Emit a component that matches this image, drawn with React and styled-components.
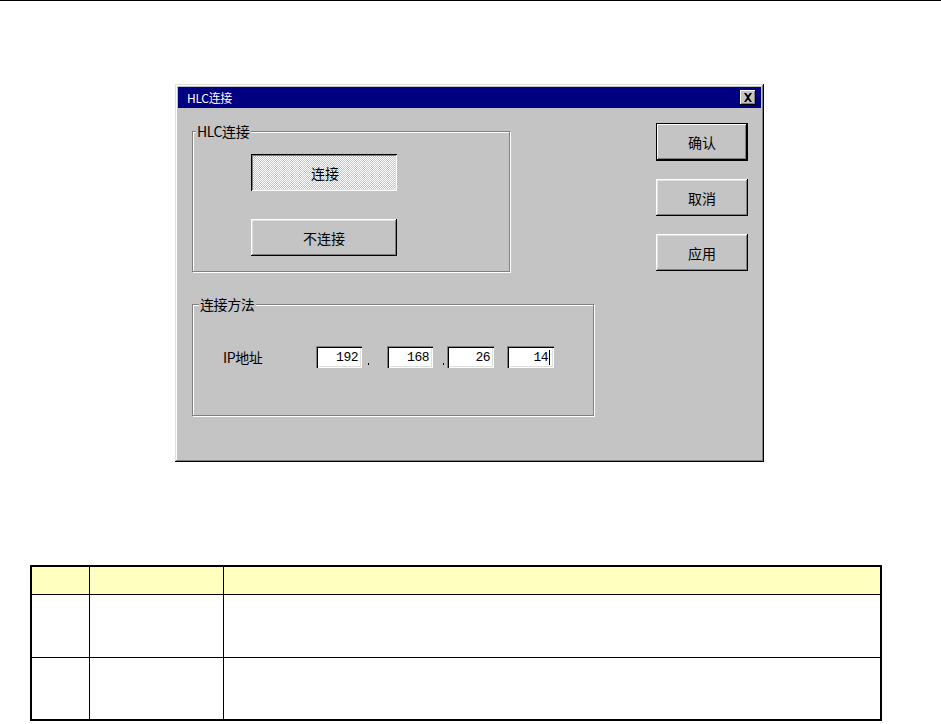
import React from "react";
import styled, { createGlobalStyle } from "styled-components";

const Global = createGlobalStyle`
  html, body { margin: 0; padding: 0; background: #fff; }
  body { font-family: "Noto Sans CJK SC", "Liberation Sans", sans-serif; }
`;

const Page = styled.div`
  width: 941px;
  height: 724px;
  border-top: 1px solid #000;
  box-sizing: border-box;
  display: flex;
  flex-direction: column;
`;

const Figure = styled.div`
  padding: 83px 0 0 175px;
`;

const Dialog = styled.div`
  width: 589px;
  height: 378px;
  box-sizing: border-box;
  padding: 3px;
  background: #c4c4c4;
  display: flex;
  flex-direction: column;
  box-shadow: inset -1px -1px #000, inset 1px 1px #dfdfdf,
    inset -2px -2px #808080, inset 2px 2px #fff;
`;

const TitleBar = styled.div`
  height: 21px;
  background: #000080;
  color: #fff;
  display: flex;
  align-items: center;
  justify-content: space-between;
  padding: 0 5px 0 9px;
  font-size: 12px;
  letter-spacing: -0.3px;
`;

const CloseBtn = styled.div`
  width: 16px;
  height: 15px;
  box-sizing: border-box;
  background: #c4c4c4;
  display: flex;
  align-items: center;
  justify-content: center;
  box-shadow: inset -1px -1px #000, inset 1px 1px #fff, inset -2px -2px #808080;
`;

const Body = styled.div`
  flex: 1;
  display: flex;
  justify-content: space-between;
  padding: 15px 13px 0 14px;
`;

const LeftCol = styled.div`
  display: flex;
  flex-direction: column;
  align-items: flex-start;
  padding-top: 8px;
  gap: 32px;
`;

const Group = styled.div`
  position: relative;
  width: ${(p) => p.$w}px;
  height: ${(p) => p.$h}px;
  box-sizing: border-box;
  border: 1px solid #808080;
  box-shadow: inset 1px 1px #fff, 1px 1px #fff;
  padding: ${(p) => p.$pad};
`;

const Legend = styled.span`
  position: absolute;
  top: -10px;
  left: ${(p) => p.$x}px;
  padding: 0 2px 0 1px;
  background: #c4c4c4;
  font-size: 14px;
  line-height: 18px;
  color: #000;
  letter-spacing: -0.4px;
`;

const ConnCol = styled.div`
  display: flex;
  flex-direction: column;
  gap: 28px;
`;

const WinButton = styled.div`
  width: ${(p) => p.$w}px;
  height: ${(p) => p.$h}px;
  box-sizing: border-box;
  display: flex;
  align-items: center;
  justify-content: center;
  font-size: 14px;
  color: #000;
  background: #c4c4c4;
  box-shadow: inset -1px -1px #000, inset 1px 1px #fff, inset -2px -2px #808080,
    inset 2px 2px #dfdfdf;
  ${(p) =>
    p.$default &&
    `border: 1px solid #000;
     box-shadow: inset -1px -1px #000, inset 1px 1px #fff, inset -2px -2px #808080;`}
  ${(p) =>
    p.$pressed &&
    `background: repeating-conic-gradient(#ffffff 0 25%, #c4c4c4 0 50%) 0 0 / 2px 2px;
     box-shadow: inset 1px 1px #000, inset -1px -1px #fff, inset 2px 2px #808080, inset -2px -2px #dfdfdf;
     padding: 1px 0 0 2px;`}
`;

const RightCol = styled.div`
  display: flex;
  flex-direction: column;
  gap: 18px;
`;

const IpRow = styled.div`
  display: flex;
  align-items: center;
`;

const IpLabel = styled.span`
  font-size: 14px;
  width: 93px;
  color: #000;
  letter-spacing: -0.4px;
`;

const IpField = styled.div`
  width: ${(p) => p.$w}px;
  height: 22px;
  box-sizing: border-box;
  background: #fff;
  box-shadow: inset 1px 1px #808080, inset 2px 2px #000, inset -1px -1px #fff,
    inset -2px -2px #dfdfdf;
  display: flex;
  align-items: center;
  justify-content: flex-end;
  padding: 1px 4px 0 0;
  font-family: "Liberation Mono", monospace;
  font-size: 13px;
  letter-spacing: -0.5px;
  color: #000;
`;

const Caret = styled.span`
  display: inline-block;
  width: 1px;
  height: 15px;
  background: #000;
  margin-left: 1px;
`;

const Gap = styled.span`
  width: ${(p) => p.$w}px;
  align-self: stretch;
  display: flex;
  align-items: flex-end;
  padding: 0 0 3px ${(p) => p.$dot}px;
  box-sizing: border-box;
`;

const Dot = styled.i`
  width: 1px;
  height: 2px;
  background: #000;
`;

const TableWrap = styled.div`
  padding: 103px 0 0 30px;
`;

const Table = styled.table`
  width: 852px;
  border-collapse: collapse;
  border: 2px solid #000;
  td {
    border: 1px solid #000;
    padding: 0;
  }
`;

const HeadRow = styled.tr`
  height: 28px;
  background: #ffffc0;
`;

const BodyRow = styled.tr`
  height: 63px;
  background: #fff;
`;

export default function App() {
  return (
    <>
      <Global />
      <Page>
        <Figure>
          <Dialog>
            <TitleBar>
              <span>HLC连接</span>
              <CloseBtn>
                <svg width="10" height="9" viewBox="0 0 10 9">
                  <path d="M1 0h2l2 2.5L7 0h2L6 4.5 9 9H7L5 6.5 3 9H1l3-4.5z" fill="#000" />
                </svg>
              </CloseBtn>
            </TitleBar>
            <Body>
              <LeftCol>
                <Group $w={318} $h={141} $pad="22px 0 0 58px">
                  <Legend $x={3}>HLC连接</Legend>
                  <ConnCol>
                    <WinButton $w={146} $h={37} $pressed>连接</WinButton>
                    <WinButton $w={146} $h={37}>不连接</WinButton>
                  </ConnCol>
                </Group>
                <Group $w={402} $h={112} $pad="41px 0 0 30px">
                  <Legend $x={6}>连接方法</Legend>
                  <IpRow>
                    <IpLabel>IP地址</IpLabel>
                    <IpField $w={46}>192</IpField>
                    <Gap $w={25} $dot={6}><Dot /></Gap>
                    <IpField $w={46}>168</IpField>
                    <Gap $w={14} $dot={10}><Dot /></Gap>
                    <IpField $w={47}>26</IpField>
                    <Gap $w={13} $dot={0} />
                    <IpField $w={47}>
                      14<Caret />
                    </IpField>
                  </IpRow>
                </Group>
              </LeftCol>
              <RightCol>
                <WinButton $w={92} $h={38} $default>确认</WinButton>
                <WinButton $w={92} $h={37}>取消</WinButton>
                <WinButton $w={92} $h={37}>应用</WinButton>
              </RightCol>
            </Body>
          </Dialog>
        </Figure>
        <TableWrap>
          <Table>
            <tbody>
              <HeadRow>
                <td style={{ width: 57 }}></td>
                <td style={{ width: 133 }}></td>
                <td></td>
              </HeadRow>
              <BodyRow>
                <td></td>
                <td></td>
                <td></td>
              </BodyRow>
              <BodyRow>
                <td></td>
                <td></td>
                <td></td>
              </BodyRow>
            </tbody>
          </Table>
        </TableWrap>
      </Page>
    </>
  );
}
